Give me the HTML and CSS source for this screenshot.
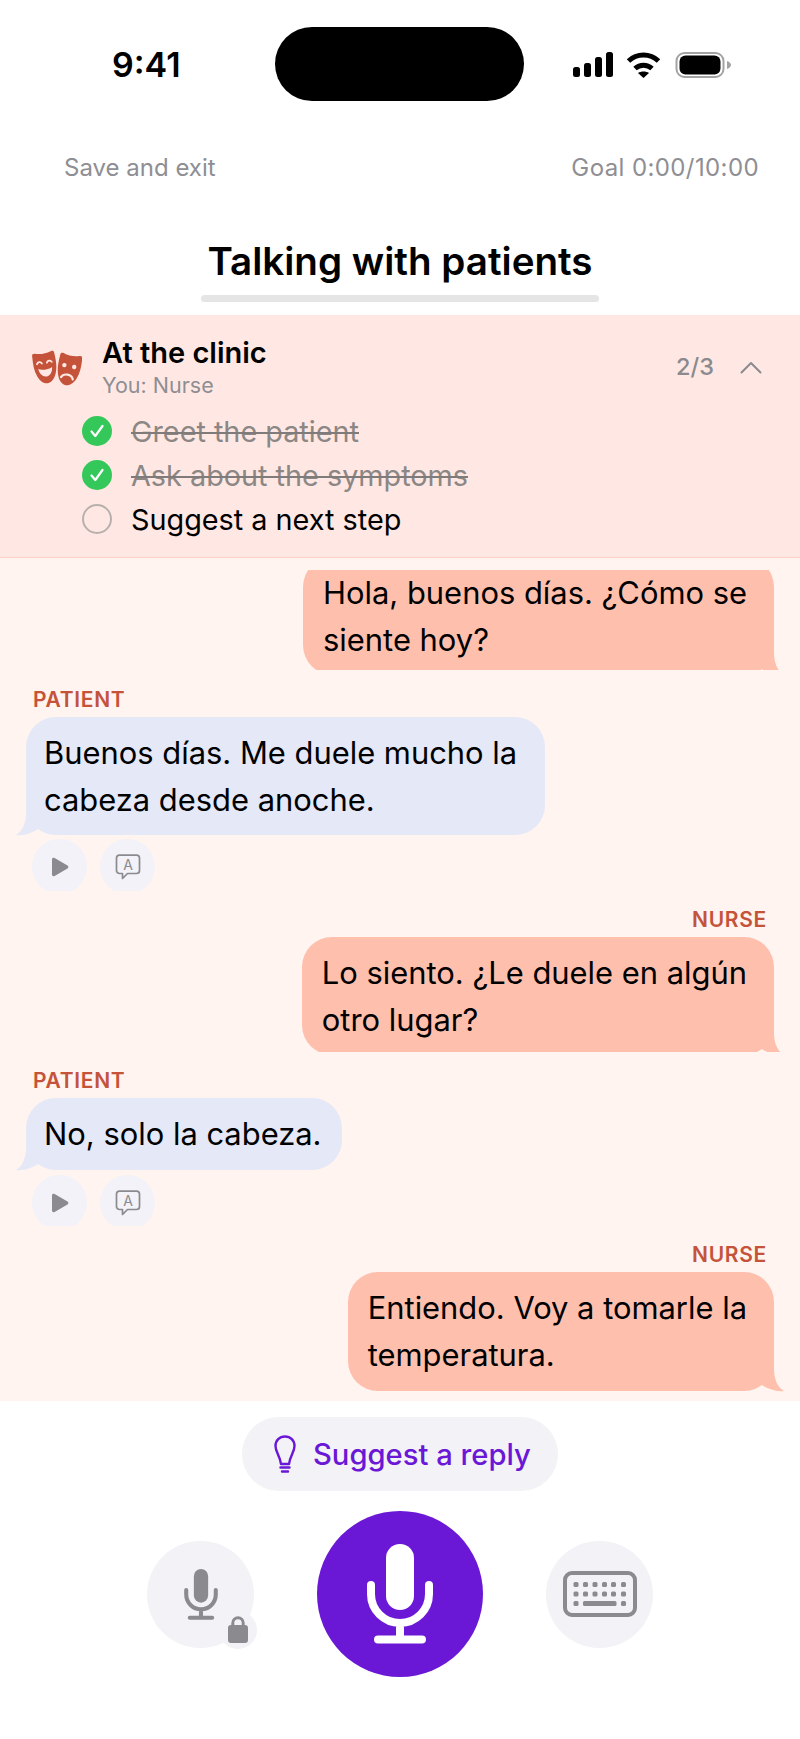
FILE: index.html
```html
<!DOCTYPE html>
<html lang="en">
<head>
<meta charset="utf-8">
<title>Talking with patients</title>
<link rel="stylesheet" href="styles.css">
</head>
<body>
<svg class="defs" aria-hidden="true">
  <symbol id="tail" viewBox="0 0 40 31"><path d="M30 0V8C30 17 33 26 40 30C32 31 24 28 16 23V0Z" fill="currentColor"/></symbol>
  <symbol id="mic" viewBox="0 0 70 104">
    <rect x="21" y="2" width="28" height="66" rx="14" fill="currentColor"/>
    <path d="M6 43V52A29 29 0 0 0 64 52V43M35 81V97M13 97.5H57" fill="none" stroke="currentColor" stroke-width="8" stroke-linecap="round"/>
  </symbol>
  <symbol id="play" viewBox="0 0 18 20"><path d="M1 2.5C1 1 2.4.4 3.6 1.1L16.5 8.6C17.7 9.3 17.7 10.7 16.5 11.4L3.6 18.9C2.4 19.6 1 19 1 17.5Z" fill="#8a8a8f"/></symbol>
  <symbol id="check" viewBox="0 0 30 30">
    <circle cx="15" cy="15" r="15" fill="#34c759"/>
    <path d="M9.5 15.5L13.3 20L20.5 10" fill="none" stroke="#fff" stroke-width="2.2" stroke-linecap="round" stroke-linejoin="round"/>
  </symbol>
</svg>

<div class="phone">
  <header class="status">
    <div class="time">9:41</div>
    <div class="island"></div>
    <svg class="status-icons" viewBox="0 0 158 26" width="158" height="26">
      <rect x="0" y="15" width="7" height="10" rx="2.5"/>
      <rect x="11" y="11" width="7" height="14" rx="2.5"/>
      <rect x="22" y="5" width="7" height="20" rx="2.5"/>
      <rect x="33" y="0" width="7" height="25" rx="2.5"/>
      <path d="M55.5 9C64 1 77 1 85.5 9M62 16.5C67 12 74 12 79 16.5" fill="none" stroke="#000" stroke-width="5"/>
      <path d="M65 21C68 19 73 19 76 21L70.5 26Z"/>
      <rect x="103.5" y="1" width="47" height="24" rx="8" fill="none" stroke="#a3a3a3" stroke-width="2"/>
      <rect x="106.5" y="3.5" width="41" height="19" rx="6"/>
      <path d="M154 9C156.500 10 158 11.500 158 13S156.500 16 154 17Z" fill="#a3a3a3"/>
    </svg>
  </header>

  <div class="topbar">
    <span>Save and exit</span>
    <span class="goal">Goal 0:00/10:00</span>
  </div>

  <h1 class="title">Talking with patients</h1>
  <div class="progress"></div>

  <section class="scenario">
    <div class="scenario-head">
      <svg class="masks" viewBox="0 0 50 36" width="50" height="36">
        <g transform="rotate(-9 13 17)">
          <path d="M2 4C2 2.500 3.500 1.800 5 2.300C10 4 16 4 21 2.300C22.800 1.800 24.200 2.500 24.300 4C25 12 25 19 22.500 25C20 31 16 33.500 13 33.500C10 33.500 6 31 3.800 25C1.500 19 1.500 12 2 4Z" fill="#c4533a"/>
          <path d="M5.500 13C6.500 10.800 9.500 10.800 10.500 13M15.500 13C16.500 10.800 19.500 10.800 20.500 13" fill="none" stroke="#ffe8e3" stroke-width="1.800" stroke-linecap="round"/>
          <path d="M6 18C9 20 17 20 20 18C19.500 23.500 16.500 26.500 13 26.500C9.500 26.500 6.500 23.500 6 18Z" fill="#ffe8e3"/>
        </g>
        <g transform="translate(-1.500 0) rotate(11 38 20)">
          <path d="M27 6C27 4.500 28.500 3.800 30 4.300C35 6 41 6 46 4.300C47.800 3.800 49.200 4.500 49.300 6C50 14 50 21 47.500 27C45 33 41 35.500 38 35.500C35 35.500 31 33 28.800 27C26.500 21 26.500 14 27 6Z" fill="#c4533a"/>
          <circle cx="33" cy="16" r="2.200" fill="#ffe8e3"/>
          <circle cx="43" cy="16" r="2.200" fill="#ffe8e3"/>
          <path d="M32 28.500C34 23.500 42 23.500 44 28.500" fill="none" stroke="#ffe8e3" stroke-width="2.200" stroke-linecap="round"/>
        </g>
      </svg>
      <div class="scenario-titles">
        <div class="scenario-name">At the clinic</div>
        <div class="scenario-role">You: Nurse</div>
      </div>
      <div class="scenario-count">2/3</div>
      <svg class="chevron" viewBox="0 0 22 13" width="22" height="13"><path d="M1.500 11.500L11 2L20.500 11.500" fill="none" stroke="#8a8a8f" stroke-width="2" stroke-linecap="round" stroke-linejoin="round"/></svg>
    </div>
    <ul class="tasks">
      <li class="task task-done"><svg class="task-icon"><use href="#check"/></svg><span>Greet the patient</span></li>
      <li class="task task-done"><svg class="task-icon"><use href="#check"/></svg><span>Ask about the symptoms</span></li>
      <li class="task"><i class="task-empty"></i><span>Suggest a next step</span></li>
    </ul>
  </section>

  <main class="chat">
    <div class="clip clip-first">
      <div class="bubble bubble-me bubble-offset">Hola, buenos días. ¿Cómo se<br>siente hoy?<svg class="tail tail-me"><use href="#tail"/></svg></div>
    </div>

    <div class="label">PATIENT</div>
    <div class="bubble bubble-them">Buenos días. Me duele mucho la<br>cabeza desde anoche.<svg class="tail tail-them"><use href="#tail"/></svg></div>
    <div class="actions">
      <div class="action"><svg class="icon-play"><use href="#play"/></svg></div>
      <div class="action">
        <svg class="icon-translate" viewBox="0 0 26 26">
          <path d="M4.5 1.2H21.5A3 3 0 0 1 24.5 4.2V16.5A3 3 0 0 1 21.5 19.5H12.5L7.5 24.5V19.5H4.5A3 3 0 0 1 1.5 16.5V4.2A3 3 0 0 1 4.5 1.2Z" fill="none" stroke="#8a8a8f" stroke-width="1.7" stroke-linejoin="round"/>
          <text x="13" y="15.5" text-anchor="middle" class="icon-letter">A</text>
        </svg>
      </div>
    </div>

    <div class="label label-me">NURSE</div>
    <div class="clip clip-second">
      <div class="bubble bubble-me">Lo siento. ¿Le duele en algún<br>otro lugar?<svg class="tail tail-me"><use href="#tail"/></svg></div>
    </div>

    <div class="label">PATIENT</div>
    <div class="bubble bubble-them bubble-short">No, solo la cabeza.<svg class="tail tail-them"><use href="#tail"/></svg></div>
    <div class="actions actions-low">
      <div class="action"><svg class="icon-play"><use href="#play"/></svg></div>
      <div class="action">
        <svg class="icon-translate" viewBox="0 0 26 26">
          <path d="M4.5 1.2H21.5A3 3 0 0 1 24.5 4.2V16.5A3 3 0 0 1 21.5 19.5H12.5L7.5 24.5V19.5H4.5A3 3 0 0 1 1.5 16.5V4.2A3 3 0 0 1 4.5 1.2Z" fill="none" stroke="#8a8a8f" stroke-width="1.7" stroke-linejoin="round"/>
          <text x="13" y="15.5" text-anchor="middle" class="icon-letter">A</text>
        </svg>
      </div>
    </div>

    <div class="label label-me">NURSE</div>
    <div class="bubble bubble-me bubble-last">Entiendo. Voy a tomarle la<br>temperatura.<svg class="tail tail-me"><use href="#tail"/></svg></div>
  </main>

  <footer class="footer">
    <button class="suggest">
      <svg class="bulb" viewBox="0 0 22 38" width="22" height="38">
        <path d="M11 1.500C5.500 1.500 1.500 5.500 1.500 11C1.500 17 6 21 7 29H15C16 21 20.500 17 20.500 11C20.500 5.500 16.500 1.500 11 1.500Z" fill="none" stroke="#6a17d6" stroke-width="2.400" stroke-linejoin="round"/>
        <path d="M6.500 32.500H15.500M8 36.500H14" fill="none" stroke="#6a17d6" stroke-width="2.400" stroke-linecap="round"/>
      </svg>
      <span>Suggest a reply</span>
    </button>
    <div class="controls">
      <div class="round round-small">
        <svg class="mic-small"><use href="#mic"/></svg>
        <div class="lock">
          <svg viewBox="0 0 20 27" width="20" height="27">
            <path d="M4.800 11V7A5.200 5.200 0 0 1 15.200 7V11" fill="none" stroke="#8a8a8f" stroke-width="3"/>
            <rect y="9" width="20" height="18" rx="3" fill="#8a8a8f"/>
          </svg>
        </div>
      </div>
      <div class="round round-main"><svg class="mic-main"><use href="#mic"/></svg></div>
      <div class="round round-small">
        <svg viewBox="0 0 74 46" width="74" height="46">
          <rect x="2" y="2" width="70" height="42" rx="7" fill="none" stroke="#8a8a8f" stroke-width="4"/>
          <g fill="#8a8a8f">
            <rect x="10.500" y="11" width="5" height="5" rx="1.500"/><rect x="20" y="11" width="5" height="5" rx="1.500"/><rect x="29.500" y="11" width="5" height="5" rx="1.500"/><rect x="39" y="11" width="5" height="5" rx="1.500"/><rect x="48" y="11" width="5" height="5" rx="1.500"/><rect x="58" y="11" width="5" height="5" rx="1.500"/>
            <rect x="10.500" y="20.500" width="5" height="5" rx="1.500"/><rect x="20" y="20.500" width="5" height="5" rx="1.500"/><rect x="29.500" y="20.500" width="5" height="5" rx="1.500"/><rect x="39" y="20.500" width="5" height="5" rx="1.500"/><rect x="48" y="20.500" width="5" height="5" rx="1.500"/><rect x="58" y="20.500" width="5" height="5" rx="1.500"/>
            <rect x="10.500" y="30" width="5" height="5" rx="1.500"/><rect x="20" y="30" width="33.500" height="5" rx="1.500"/><rect x="58" y="30" width="5" height="5" rx="1.500"/>
          </g>
        </svg>
      </div>
    </div>
  </footer>
</div>
</body>
</html>
```

FILE: styles.css
```css
* { box-sizing: border-box; }
html, body { margin: 0; padding: 0; background: #fff; }
body { font-family: Inter, "Liberation Sans", sans-serif; color: #000; }
.defs { position: absolute; width: 0; height: 0; overflow: hidden; }
.phone { width: 800px; height: 1739px; overflow: hidden; background: #fff; }

.status { display: grid; grid-template-columns: 275px 249px 276px; align-items: center; height: 130px; padding-bottom: 56px; padding-top: 27px; }
.time { font-size: 34px; font-weight: 600; padding-left: 112px; line-height: 40px; margin-top: 1px; }
.island { height: 74px; background: #000; border-radius: 37px; }
.status-icons { margin-left: 49px; margin-top: 1px; }

.topbar { display: flex; justify-content: space-between; height: 74px; padding: 0 41px 0 64px; align-items: center; font-size: 24px; color: #8e8e93; }
.goal { letter-spacing: 0.4px; }

.title { margin: 27px 0 0; font-size: 38.6px; font-weight: 600; line-height: 60px; text-align: center; }
.progress { width: 398px; height: 7px; margin: 4px auto 13px; background: #e5e5e5; border-radius: 3.5px; }

.scenario { height: 243px; padding-top: 20px; background: #ffe8e3; border-bottom: 1px solid #ffd0c5; }
.scenario-head { display: flex; padding: 0 38px 0 32px; }
.masks { margin-top: 15px; margin-right: 20px; flex: none; }
.scenario-titles { flex: 1; }
.scenario-name { font-size: 29px; font-weight: 600; line-height: 36px; }
.scenario-role { font-size: 21.500px; line-height: 28px; color: #8e8e93; }
.scenario-count { font-size: 23.500px; font-weight: 500; line-height: 64px; height: 64px; color: #8a8a8f; }
.chevron { margin: 26px 0 0 26px; }
.tasks { list-style: none; margin: 10px 0 0; padding: 0 0 0 82px; }
.task { display: flex; align-items: center; height: 44px; font-size: 28.800px; }
.task-icon { width: 30px; height: 30px; margin-right: 19px; flex: none; }
.task-empty { width: 30px; height: 30px; margin-right: 19px; flex: none; border: 2.5px solid #b8b0ad; border-radius: 50%; }
.task-done span { color: #8c8785; text-decoration: line-through; text-decoration-color: #7f7b7a; text-decoration-thickness: 2px; }

.chat { display: flex; flex-direction: column; height: 843px; overflow: hidden; padding: 12px 26px 0; background: #fff4ef; }
.clip { flex: none; overflow: hidden; align-self: flex-end; padding-right: 10px; margin-right: -10px; }
.clip-first { height: 100px; margin-bottom: 1px; }
.clip-second { height: 115px; }
.bubble { position: relative; flex: none; width: fit-content; white-space: nowrap; font-size: 30.900px; line-height: 47px; padding: 12px 27px 12px 20px; border-radius: 30px; }
.bubble-me { align-self: flex-end; background: #ffbfad; color: #000; }
.bubble-them { align-self: flex-start; background: #e4e8f7; color: #000; padding-left: 18px; padding-right: 28px; }
.bubble-offset { margin-top: -13px; }
.bubble-short { height: 72px; padding-right: 20px; }
.bubble-last { height: 119px; }
.tail { position: absolute; bottom: -1px; width: 40px; height: 31px; }
.tail-me { right: -10px; color: #ffbfad; }
.tail-them { left: -10px; color: #e4e8f7; transform: scaleX(-1); }

.label { flex: none; height: 26px; margin: 16px 0 4px 7px; font-size: 21px; font-weight: 600; line-height: 26px; color: #c4533a; letter-spacing: 0.7px; }
.label-me { align-self: flex-end; margin-left: 0; margin-right: 7px; }
.actions { flex: none; display: flex; gap: 13px; height: 52px; margin-top: 4px; padding-left: 6px; overflow: hidden; }
.actions-low { height: 51px; margin-top: 5px; }
.action { flex: none; display: flex; align-items: center; justify-content: center; width: 55px; height: 55px; border-radius: 50%; background: #f2f2f8; }
.icon-play { width: 18px; height: 20px; }
.icon-translate { width: 26px; height: 26px; }
.icon-letter { font-family: Inter, sans-serif; font-size: 14px; fill: #8a8a8f; }

.footer { display: flex; flex-direction: column; align-items: center; padding-top: 16px; background: #fff; }
.suggest { display: flex; align-items: center; gap: 17px; height: 74px; width: 316px; padding: 0 0 0 32px; border: 0; border-radius: 37px; background: #f2f2f7; color: #6a17d6; font: 500 29.200px Inter, sans-serif; }
.controls { display: flex; align-items: center; gap: 63px; margin-top: 20px; }
.round { position: relative; display: flex; align-items: center; justify-content: center; border-radius: 50%; background: #f2f2f7; flex: none; }
.round-small { width: 107px; height: 107px; }
.round-main { width: 166px; height: 166px; background: #6a17d6; }
.mic-main { width: 70px; height: 104px; color: #fff; }
.mic-small { width: 36px; height: 53px; color: #8a8a8f; }
.lock { position: absolute; left: 72px; top: 70px; display: flex; align-items: center; justify-content: center; width: 38px; height: 38px; border-radius: 50%; background: #f2f2f7; }
```
